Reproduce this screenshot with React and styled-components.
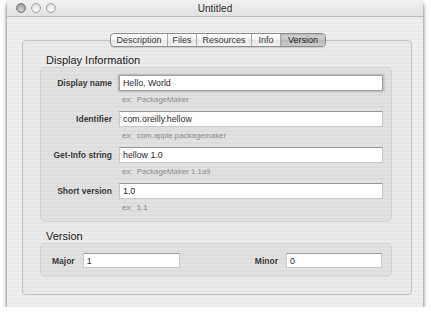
import React from "react";
import styled, { createGlobalStyle, css } from "styled-components";

const GlobalStyle = createGlobalStyle`
  html, body {
    margin: 0;
    padding: 0;
    background: #ffffff;
  }
  body {
    font-family: "Lucida Grande", "Liberation Sans", Arial, sans-serif;
    color: #222;
  }
`;

const Window = styled.div`
  margin-left: 7px;
  width: 416px;
  height: 307px;
  display: flex;
  flex-direction: column;
  border-radius: 5px 5px 0 0;
  overflow: hidden;
  background: repeating-linear-gradient(
    to bottom,
    #efefef 0px,
    #efefef 2px,
    #eaeaea 2px,
    #eaeaea 4px
  );
  box-shadow: 0 3px 5px rgba(0, 0, 0, 0.55), 0 0 2px rgba(0, 0, 0, 0.25);
`;

const TitleBar = styled.div`
  height: 16px;
  flex: none;
  display: grid;
  grid-template-columns: 1fr auto 1fr;
  align-items: center;
  background: linear-gradient(to bottom, #f1f1f1, #e2e2e2);
  border-bottom: 1px solid #bcbcbc;
`;

const Lights = styled.div`
  display: flex;
  align-items: center;
  gap: 5px;
  padding-left: 9px;
`;

const Light = styled.span`
  width: 8px;
  height: 8px;
  border-radius: 50%;
  border: 1px solid #a6a6a6;
  background: radial-gradient(circle at 50% 70%, #ffffff 0%, #e6e6e6 55%, #d0d0d0 100%);
  ${({ $active }) =>
    $active &&
    css`
      border-color: #7c7c7c;
      background: radial-gradient(circle at 50% 70%, #d8d8d8 0%, #a9a9a9 55%, #8a8a8a 100%);
    `}
`;

const Title = styled.div`
  font-size: 10px;
  color: #2a2a2a;
  letter-spacing: 0.1px;
`;

const Body = styled.div`
  flex: 1;
  display: flex;
  flex-direction: column;
  padding: 16px 11px 14px 15px;
`;

const TabStrip = styled.div`
  align-self: center;
  margin-left: 2px;
  display: flex;
  height: 14px;
  margin-bottom: -7px;
  position: relative;
  z-index: 1;
  border: 1px solid #8f8f8f;
  border-radius: 4px;
  overflow: hidden;
  box-sizing: border-box;
  background: linear-gradient(to bottom, #ffffff, #f2f2f2 50%, #e6e6e6 51%, #f4f4f4);
  box-shadow: 0 1px 1px rgba(0, 0, 0, 0.12);
`;

const Tab = styled.div`
  width: ${({ $w }) => $w}px;
  display: flex;
  align-items: center;
  justify-content: center;
  font-size: 9px;
  color: #3a3a3a;
  border-left: 1px solid #a9a9a9;
  box-sizing: border-box;
  &:first-child {
    border-left: none;
  }
  ${({ $selected }) =>
    $selected &&
    css`
      color: #1a1a1a;
      background: linear-gradient(to bottom, #d6d6d6, #c6c6c6 50%, #b9b9b9 51%, #cdcdcd);
      box-shadow: inset 0 1px 2px rgba(0, 0, 0, 0.18);
    `}
`;

const TabBox = styled.div`
  flex: 1;
  display: flex;
  flex-direction: column;
  padding: 13px 19px 17px 17px;
  border: 1px solid #c4c4c4;
  border-radius: 4px;
  background: rgba(0, 0, 0, 0.015);
  box-sizing: border-box;
`;

const Heading = styled.div`
  height: 13px;
  line-height: 13px;
  font-size: 11px;
  color: #1c1c1c;
  padding-left: 6px;
  margin-top: ${({ $gap }) => $gap || 0}px;
`;

const Group = styled.div`
  border: 1px solid #d3d3d3;
  border-radius: 5px;
  background: rgba(0, 0, 0, 0.035);
  box-sizing: border-box;
`;

const InfoGroup = styled(Group)`
  height: 155px;
  padding: 7px 8px 3px 0;
`;

const Row = styled.div`
  display: grid;
  grid-template-columns: 71px 1fr;
  column-gap: 7px;
  grid-template-rows: 16px 20px;
`;

const Label = styled.div`
  font-size: 8.5px;
  font-weight: bold;
  color: #3a3a3a;
  text-align: right;
  align-self: center;
  white-space: nowrap;
`;

const Field = styled.input`
  box-sizing: border-box;
  width: ${({ $w }) => ($w ? `${$w}px` : "100%")};
  height: ${({ $h }) => $h || 16}px;
  margin: 0;
  padding: 0 0 0 3px;
  font-family: inherit;
  font-size: 8.8px;
  color: #2a2a2a;
  background: #ffffff;
  border: 1px solid #c9c9c9;
  border-top-color: #9a9a9a;
  border-radius: 0;
  outline: none;
  ${({ $focused }) =>
    $focused &&
    css`
      border: 1px solid #9d9d9d;
      box-shadow: 0 0 0 1px #c2c2c2, 0 0 1px 2px rgba(0, 0, 0, 0.08);
      border-radius: 1px;
    `}
`;

const Hint = styled.div`
  grid-column: 2;
  font-size: 7.8px;
  color: #8a8a8a;
  line-height: 18px;
  padding-left: 3px;
  white-space: pre;
`;

const VersionGroup = styled(Group)`
  height: 34px;
  display: flex;
  align-items: center;
  justify-content: space-between;
  padding: 1px 9px 0 11px;
`;

const Pair = styled.div`
  display: flex;
  align-items: center;
  gap: 8px;
`;

const rows = [
  { label: "Display name", value: "Hello, World", hint: "ex:  PackageMaker", focused: true },
  { label: "Identifier", value: "com.oreilly.hellow", hint: "ex:  com.apple.packagemaker" },
  { label: "Get-Info string", value: "hellow 1.0", hint: "ex:  PackageMaker 1.1a9" },
  { label: "Short version", value: "1.0", hint: "ex:  1.1" },
];

const tabs = [
  { name: "Description", w: 56 },
  { name: "Files", w: 29 },
  { name: "Resources", w: 55 },
  { name: "Info", w: 29 },
  { name: "Version", w: 45, selected: true },
];

export default function App() {
  return (
    <>
      <GlobalStyle />
      <Window>
        <TitleBar>
          <Lights>
            <Light $active />
            <Light />
            <Light />
          </Lights>
          <Title>Untitled</Title>
          <div />
        </TitleBar>
        <Body>
          <TabStrip>
            {tabs.map((t) => (
              <Tab key={t.name} $w={t.w} $selected={t.selected}>
                {t.name}
              </Tab>
            ))}
          </TabStrip>
          <TabBox>
            <Heading>Display Information</Heading>
            <InfoGroup>
              {rows.map((r) => (
                <Row key={r.label}>
                  <Label>{r.label}</Label>
                  <Field readOnly defaultValue={r.value} $focused={r.focused} />
                  <Hint>{r.hint}</Hint>
                </Row>
              ))}
            </InfoGroup>
            <Heading $gap={8}>Version</Heading>
            <VersionGroup>
              <Pair>
                <Label>Major</Label>
                <Field readOnly defaultValue="1" $w={97} $h={15} />
              </Pair>
              <Pair>
                <Label>Minor</Label>
                <Field readOnly defaultValue="0" $w={96} $h={15} />
              </Pair>
            </VersionGroup>
          </TabBox>
        </Body>
      </Window>
    </>
  );
}
